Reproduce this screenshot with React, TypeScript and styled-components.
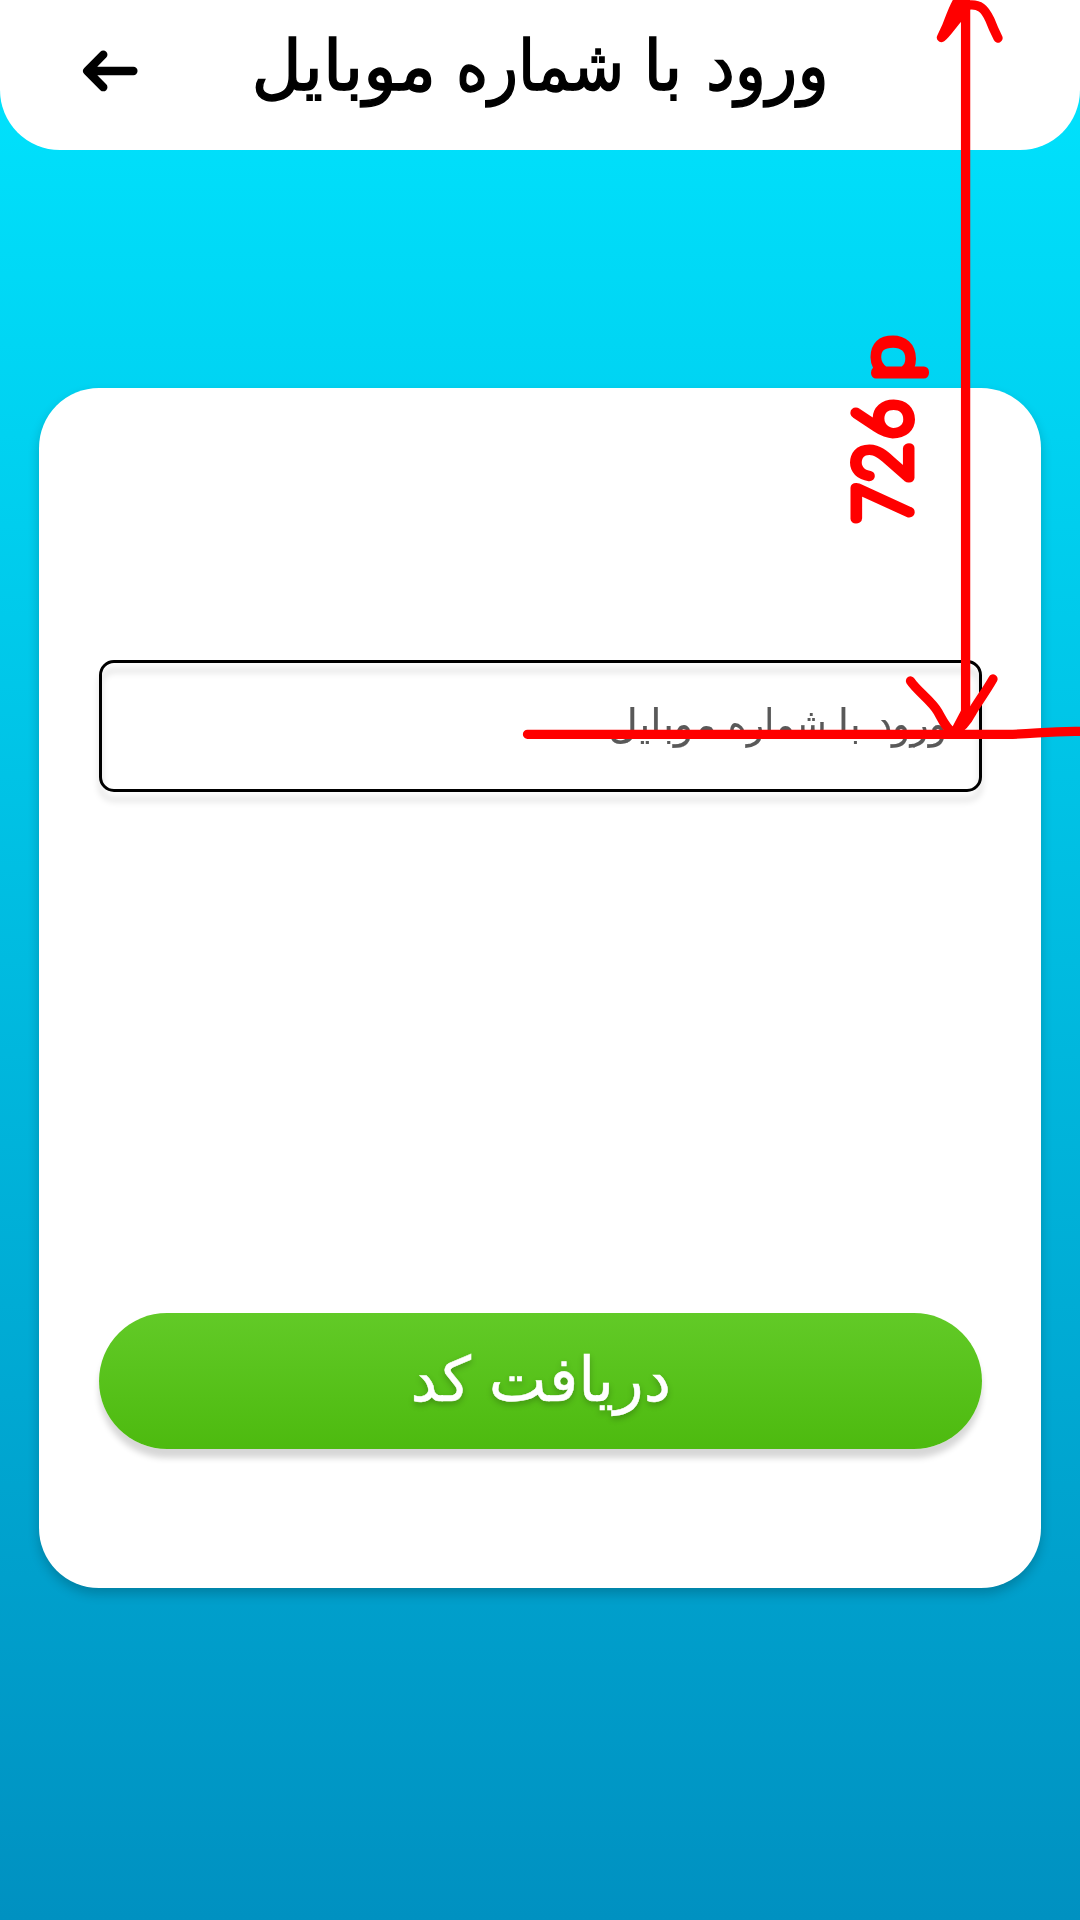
import React from "react";
import styled, { createGlobalStyle } from "styled-components";

const GlobalStyle = createGlobalStyle`
  *, *::before { box-sizing: border-box; }
  body { margin: 0; }
`;

const Screen = styled.div`
  position: relative;
  display: flex;
  flex-direction: column;
  align-items: center;
  width: 1080px;
  height: 1920px;
  overflow: hidden;
  background: linear-gradient(180deg, #00e5ff 0%, #0091c1 100%);
  font-family: "DejaVu Sans", sans-serif;
`;

const Header = styled.header`
  display: grid;
  grid-template-columns: 220px 1fr 220px;
  align-items: center;
  width: 100%;
  height: 150px;
  flex: none;
  background: #fff;
  border-radius: 0 0 60px 60px;
`;

const BackButton = styled.button`
  display: flex;
  width: 60px;
  height: 44px;
  margin: 0 0 8px 80px;
  padding: 0;
  border: 0;
  background: none;
`;

const Label = styled.span<{ $size: number; $stroke: number; $rise: number }>`
  display: inline-block;
  direction: rtl;
  white-space: nowrap;
  font-size: ${(p) => p.$size}px;
  line-height: 1.2;
  -webkit-text-stroke: ${(p) => p.$stroke}px currentColor;
  transform: translateY(${(p) => p.$rise}px);
`;

const Word = styled.span<{ $width: number; $stretch: number }>`
  display: inline-block;
  width: ${(p) => p.$width}em;
  transform: scaleX(${(p) => p.$stretch});
  transform-origin: right center;
`;

const Title = styled.h1`
  display: flex;
  justify-content: center;
  margin: 0;
  padding-left: 5px;
  font-weight: 400;
  color: #000;
`;

const Card = styled.main`
  display: flex;
  flex-direction: column;
  justify-content: space-between;
  width: 1002px;
  height: 1200px;
  flex: none;
  margin-top: 238px;
  padding: 272px 59px 139px 60px;
  background: #fff;
  border-radius: 60px;
  box-shadow: 0 6px 12px rgba(0, 0, 0, 0.2);
`;

const Field = styled.div`
  position: relative;
  display: flex;
  align-items: center;
  justify-content: flex-end;
  height: 132px;
  padding: 0 35px;
  color: #595959;

  &::before {
    content: "";
    position: absolute;
    inset: 0;
    border: 3px solid #000;
    border-radius: 15px;
    filter: drop-shadow(0 9px 3px rgba(0, 0, 0, 0.16));
  }
`;

const Submit = styled.button`
  display: flex;
  align-items: center;
  justify-content: center;
  height: 136px;
  padding: 0 0 0 2px;
  border: 0;
  border-radius: 68px;
  background: linear-gradient(180deg, #62ca27 0%, #4dba0f 100%);
  box-shadow: 0 9px 6px rgba(0, 0, 0, 0.16);
  color: #fff;
  font-family: inherit;
  text-shadow: 0 3px 6px rgba(0, 0, 0, 0.25);
`;

const Markup = styled.svg`
  position: absolute;
  inset: 0;
  pointer-events: none;
`;

function LoginPhrase() {
  return (
    <>
      <Word $width={1.782} $stretch={0.926}>ورود</Word>{" "}
      <Word $width={0.503} $stretch={0.95}>با</Word>{" "}
      <Word $width={2.376} $stretch={0.882}>شماره</Word>{" "}
      <Word $width={2.571} $stretch={0.987}>موبایل</Word>
    </>
  );
}

export default function App() {
  return (
    <>
      <GlobalStyle />
      <Screen>
        <Header>
          <BackButton aria-label="back">
            <svg width="60" height="44" viewBox="0 0 60 44" fill="none" stroke="#000" strokeWidth="8.3" strokeLinecap="round" strokeLinejoin="round">
              <path d="M53.4 22H8M23.3 5.7L7.2 22L23.3 38.2" />
            </svg>
          </BackButton>
          <Title>
            <Label $size={70} $stroke={1.5} $rise={-9}><LoginPhrase /></Label>
          </Title>
        </Header>
        <Card>
          <Field>
            <Label $size={41.1} $stroke={0.2} $rise={-1}><LoginPhrase /></Label>
          </Field>
          <Submit>
            <Label $size={62} $stroke={0.5} $rise={-1}>
              <Word $width={2.92} $stretch={0.99}>دریافت</Word>{" "}
              <Word $width={0.952} $stretch={0.975}>کد</Word>
            </Label>
          </Submit>
        </Card>
        <Markup width="1080" height="1920" viewBox="0 0 1080 1920" fill="none" stroke="#f00" strokeWidth="9.3" strokeLinecap="round" strokeLinejoin="round">
          <path d="M965.6 0V714" />
          <path d="M941.5 37.5C949 31 951 25 963 13L960 -3C951 10 948 27 941.5 37.5L958 2" />
          <path d="M966 5.5C980 3 985 9 990 20C993 28 995 32 998 38" />
          <path d="M910.5 681C917 691 932 701 938 712C943 721 946 728 953 733C960 729 967 722 971 714C977 703 985 693 993 679M965 713L955 732" />
          <path d="M527.5 734.3H1008C1035 734.3 1048 730.5 1085 731.5" />
          <g fill="#f00" strokeWidth="11" fontFamily="Lato" fontWeight="100">
            <text transform="translate(908.5 523.5) rotate(-90) scale(0.88 1)" x="0 47 96" y="0" fontSize="77">726</text>
            <text transform="translate(910.5 380.5) rotate(-90) scale(1.12 1)" fontSize="73" strokeWidth="10">p</text>
          </g>
        </Markup>
      </Screen>
    </>
  );
}
